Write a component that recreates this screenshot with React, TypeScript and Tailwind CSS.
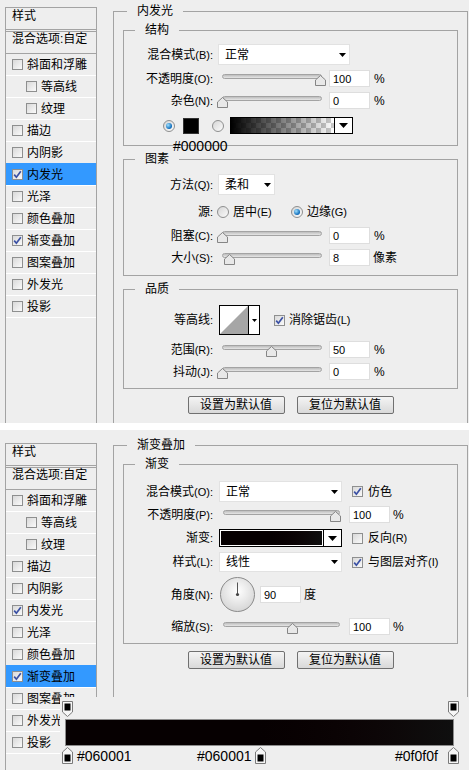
import React from 'react';

type Item = { label: string; indent?: boolean };

const ITEMS: Item[] = [
  { label: '斜面和浮雕' },
  { label: '等高线', indent: true },
  { label: '纹理', indent: true },
  { label: '描边' },
  { label: '内阴影' },
  { label: '内发光' },
  { label: '光泽' },
  { label: '颜色叠加' },
  { label: '渐变叠加' },
  { label: '图案叠加' },
  { label: '外发光' },
  { label: '投影' },
];

const CHECKED = ['内发光', '渐变叠加'];

function Check({ on }: { on?: boolean }) {
  return (
    <span className="flex h-[11px] w-[11px] shrink-0 items-center justify-center border border-[#8e8f8f] bg-linear-to-br from-[#d9d9d9] to-[#fafafa]">
      {on && (
        <svg width="9" height="9" viewBox="0 0 9 9">
          <path d="M1.2 4.6 L3.4 7.2 L7.8 1.2" fill="none" stroke="#3a50a4" strokeWidth="1.7" />
        </svg>
      )}
    </span>
  );
}

function Radio({ on }: { on?: boolean }) {
  return (
    <span className="flex h-[12px] w-[12px] shrink-0 items-center justify-center rounded-full border border-[#8e8f8f] bg-linear-to-br from-[#d6d6d6] to-[#fbfbfb]">
      {on && <span className="h-[6px] w-[6px] rounded-full bg-[radial-gradient(circle_at_35%_35%,#9fe0ff,#0b69b8_70%)]" />}
    </span>
  );
}

function Tri({ big }: { big?: boolean }) {
  return big ? (
    <svg width="9" height="5" viewBox="0 0 9 5">
      <path d="M0 0H9L4.5 5Z" fill="#000" />
    </svg>
  ) : (
    <svg width="7" height="4" viewBox="0 0 7 4">
      <path d="M0 0H7L3.5 4Z" fill="#000" />
    </svg>
  );
}

function Lbl({ t, k }: { t: string; k?: string }) {
  return (
    <span className="w-[89px] shrink-0 text-right">
      {t}
      {k && <span className="text-[11px]">({k})</span>}
      <span className="text-[11px]">:</span>
    </span>
  );
}

function Num({ v }: { v: string }) {
  return (
    <span className="flex h-[17px] w-[41px] shrink-0 items-center border border-[#dedede] bg-white pl-[3px] text-[11px]">
      {v}
    </span>
  );
}

function Slider({ wide, left }: { wide?: boolean; left: number }) {
  return (
    <span className={`relative h-[17px] shrink-0 ${wide ? 'ml-[6px] w-[130px]' : 'ml-[5px] w-[111px]'}`}>
      <span
        className={`absolute left-[4px] top-[4px] h-[5px] rounded-full border border-[#a3a3a3] bg-linear-to-b from-[#bdbdbd] to-[#e6e6e6] ${
          wide ? 'right-[9px]' : 'right-[7px]'
        }`}
      />
      <svg className="absolute top-[5px]" style={{ left }} width="11" height="11" viewBox="0 0 11 11">
        <path d="M0.5 10.5V5L5.5 0.5L10.5 5V10.5Z" fill="#e8e8e8" stroke="#858585" />
      </svg>
    </span>
  );
}

function Select({ text, w }: { text: string; w: string }) {
  return (
    <div className={`${w} flex h-full shrink-0 items-center justify-between border border-[#e2e2e2] bg-white pl-[6px] pr-[3px]`}>
      <span>{text}</span>
      <Tri />
    </div>
  );
}

function Group({ title, className, children }: { title: string; className: string; children: React.ReactNode }) {
  return (
    <div className={`relative border border-[#a3a3a3] ${className}`}>
      <span className="absolute -top-[8px] left-[11px] bg-[#eeeeee] px-[10px] leading-[14px]">{title}</span>
      {children}
    </div>
  );
}

function Btn({ children }: { children: React.ReactNode }) {
  return (
    <div className="flex h-[18px] w-[97px] items-center justify-center rounded-[2px] border border-[#707070] bg-linear-to-b from-[#f4f4f4] to-[#d9d9d9]">
      {children}
    </div>
  );
}

function Buttons() {
  return (
    <div className="mt-[7px] flex justify-center gap-[12px]">
      <Btn>设置为默认值</Btn>
      <Btn>复位为默认值</Btn>
    </div>
  );
}

function Sidebar({ active }: { active: string }) {
  return (
    <div className="flex w-[92px] shrink-0 flex-col self-stretch border-l border-r border-t border-[#a3a3a3]">
      <div className="h-[21px] pl-[6px] pt-[1px]">样式</div>
      <div className="h-[3px] border-b border-t border-[#a3a3a3]" />
      <div className="h-[21px] pl-[6px]">混合选项:自定</div>
      {ITEMS.map((it, i) => {
        const on = it.label === active;
        const line = i === 0 ? 'border-[#a3a3a3]' : on ? 'border-[#3399ff]' : 'border-white';
        return (
          <div
            key={it.label}
            className={`flex h-[22px] shrink-0 items-center border-t ${line} ${on ? 'bg-[#3399ff]' : ''} ${
              it.indent ? 'pl-[20px]' : 'pl-[6px]'
            }`}
          >
            <Check on={CHECKED.includes(it.label)} />
            <span className="ml-[4px]">{it.label}</span>
          </div>
        );
      })}
      <div className="border-t border-white" />
    </div>
  );
}

function TopStop() {
  return (
    <svg width="11" height="16" viewBox="0 0 11 16">
      <path d="M0.5 0.5H10.5V11L5.5 15.5L0.5 11Z" fill="#f6f6f6" stroke="#7a7a7a" />
      <rect x="2.5" y="2.5" width="6" height="7" fill="#000" />
    </svg>
  );
}

function BottomStop() {
  return (
    <svg width="11" height="17" viewBox="0 0 11 17">
      <path d="M0.5 5L5.5 0.5L10.5 5V16.5H0.5Z" fill="#f6f6f6" stroke="#7a7a7a" />
      <rect x="2.5" y="7.5" width="6" height="7" fill="#000" />
    </svg>
  );
}

const HEX = "[font-family:'Liberation_Sans',sans-serif] text-[14px] leading-[16px]";

function InnerGlow() {
  return (
    <div className="flex h-[423px] overflow-hidden bg-[#eeeeee] pl-[5px] pt-[7px]">
      <Sidebar active="内发光" />
      <div className="relative ml-[16px] mt-[4px] w-[355px] shrink-0 self-stretch border-l border-r border-t border-[#a3a3a3] px-[9px] pt-[18px]">
        <span className="absolute -top-[8px] left-[13px] bg-[#eeeeee] px-[10px] leading-[14px]">内发光</span>

        <Group title="结构" className="pb-[11px] pt-[13px]">
          <div className="flex h-[21px] items-center">
            <Lbl t="混合模式" k="B" />
            <div className="ml-[5px] h-full">
              <Select text="正常" w="w-[132px]" />
            </div>
          </div>
          <div className="mt-[5px] flex h-[17px] items-center">
            <Lbl t="不透明度" k="O" />
            <Slider left={97} />
            <Num v="100" />
            <span className="ml-[4px]">%</span>
          </div>
          <div className="mt-[5px] flex h-[17px] items-center">
            <Lbl t="杂色" k="N" />
            <Slider left={-1} />
            <Num v="0" />
            <span className="ml-[4px]">%</span>
          </div>
          <div className="mt-[8px] flex h-[17px] items-center">
            <span className="ml-[39px]">
              <Radio on />
            </span>
            <span className="ml-[8px] h-[16px] w-[16px] border border-[#333] bg-black" />
            <span className="ml-[13px]">
              <Radio />
            </span>
            <div className="ml-[6px] flex h-[17px] w-[123px] border border-black">
              <div className="flex-1 bg-[repeating-conic-gradient(#cbcbcb_0%_25%,#ffffff_0%_50%)] bg-size-[10px_10px]">
                <div className="h-full bg-linear-to-r from-black to-transparent" />
              </div>
              <div className="flex w-[18px] items-center justify-center border-l border-black bg-white">
                <Tri big />
              </div>
            </div>
          </div>
          <span className={`absolute -bottom-[9px] left-[49px] ${HEX}`}>#000000</span>
        </Group>

        <Group title="图素" className="mt-[13px] pb-[9px] pt-[14px]">
          <div className="flex h-[21px] items-center">
            <Lbl t="方法" k="Q" />
            <div className="ml-[5px] h-full">
              <Select text="柔和" w="w-[57px]" />
            </div>
          </div>
          <div className="mt-[8px] flex h-[18px] items-center">
            <Lbl t="源" />
            <div className="ml-[4px] flex w-[74px] items-center">
              <Radio />
              <span className="ml-[4px]">
                居中<span className="text-[11px]">(E)</span>
              </span>
            </div>
            <Radio on />
            <span className="ml-[4px]">
              边缘<span className="text-[11px]">(G)</span>
            </span>
          </div>
          <div className="mt-[6px] flex h-[17px] items-center">
            <Lbl t="阻塞" k="C" />
            <Slider left={-1} />
            <Num v="0" />
            <span className="ml-[4px]">%</span>
          </div>
          <div className="mt-[5px] flex h-[17px] items-center">
            <Lbl t="大小" k="S" />
            <Slider left={6} />
            <Num v="8" />
            <span className="ml-[3px]">像素</span>
          </div>
        </Group>

        <Group title="品质" className="mt-[13px] pb-[8px] pt-[15px]">
          <div className="flex h-[30px] items-center">
            <Lbl t="等高线" />
            <div className="ml-[6px] flex h-[30px] w-[41px] border border-black bg-white">
              <svg width="28" height="28" viewBox="0 0 28 28">
                <path d="M0 28L28 0V28Z" fill="#a6a6a6" />
              </svg>
              <div className="flex flex-1 items-center justify-center border-l border-black">
                <svg width="5" height="3" viewBox="0 0 5 3">
                  <path d="M0 0H5L2.5 3Z" fill="#000" />
                </svg>
              </div>
            </div>
            <span className="ml-[14px]">
              <Check on />
            </span>
            <span className="ml-[4px]">
              消除锯齿<span className="text-[11px]">(L)</span>
            </span>
          </div>
          <div className="mt-[6px] flex h-[17px] items-center">
            <Lbl t="范围" k="R" />
            <Slider left={48} />
            <Num v="50" />
            <span className="ml-[4px]">%</span>
          </div>
          <div className="mt-[5px] flex h-[17px] items-center">
            <Lbl t="抖动" k="J" />
            <Slider left={-1} />
            <Num v="0" />
            <span className="ml-[4px]">%</span>
          </div>
        </Group>

        <Buttons />
      </div>
    </div>
  );
}

function GradientOverlay() {
  return (
    <div className="relative flex h-[340px] overflow-hidden bg-[#eeeeee] pl-[5px] pt-[13px]">
      <Sidebar active="渐变叠加" />
      <div className="relative ml-[16px] mt-[2px] w-[355px] shrink-0 self-stretch border-l border-r border-t border-[#a3a3a3] px-[9px] pt-[18px]">
        <span className="absolute -top-[8px] left-[13px] bg-[#eeeeee] px-[10px] leading-[14px]">渐变叠加</span>

        <Group title="渐变" className="pb-[8px] pt-[16px]">
          <div className="flex h-[21px] items-center">
            <Lbl t="混合模式" k="O" />
            <div className="ml-[6px] h-full">
              <Select text="正常" w="w-[123px]" />
            </div>
            <span className="ml-[10px]">
              <Check on />
            </span>
            <span className="ml-[5px]">仿色</span>
          </div>
          <div className="mt-[4px] flex h-[17px] items-center">
            <Lbl t="不透明度" k="P" />
            <Slider wide left={111} />
            <Num v="100" />
            <span className="ml-[3px]">%</span>
          </div>
          <div className="mt-[6px] flex h-[18px] items-center">
            <Lbl t="渐变" />
            <div className="ml-[6px] flex h-[18px] w-[123px] border border-black bg-white">
              <div className="m-[1px] flex-1 bg-linear-to-r from-[#060001] via-[#060001] to-[#0f0f0f]" />
              <div className="flex w-[18px] items-center justify-center border-l border-black">
                <Tri big />
              </div>
            </div>
            <span className="ml-[10px]">
              <Check />
            </span>
            <span className="ml-[5px]">
              反向<span className="text-[11px]">(R)</span>
            </span>
          </div>
          <div className="mt-[5px] flex h-[20px] items-center">
            <Lbl t="样式" k="L" />
            <div className="ml-[6px] h-full">
              <Select text="线性" w="w-[123px]" />
            </div>
            <span className="ml-[10px]">
              <Check on />
            </span>
            <span className="ml-[5px]">
              与图层对齐<span className="text-[11px]">(I)</span>
            </span>
          </div>
          <div className="mt-[5px] flex h-[35px] items-center">
            <Lbl t="角度" k="N" />
            <svg className="ml-[7px] shrink-0" width="35" height="35" viewBox="0 0 35 35">
              <defs>
                <radialGradient id="dial" cx="50%" cy="40%" r="60%">
                  <stop offset="0%" stopColor="#ffffff" />
                  <stop offset="100%" stopColor="#d6d6d6" />
                </radialGradient>
              </defs>
              <circle cx="17.5" cy="17.5" r="17" fill="url(#dial)" stroke="#8a8a8a" />
              <line x1="17.5" y1="5.5" x2="17.5" y2="17.5" stroke="#555" strokeWidth="1" />
              <circle cx="17.5" cy="17.5" r="1.6" fill="#444" />
            </svg>
            <span className="ml-[5px]">
              <Num v="90" />
            </span>
            <span className="ml-[3px]">度</span>
          </div>
          <div className="mt-[6px] flex h-[17px] items-center">
            <Lbl t="缩放" k="S" />
            <Slider wide left={68} />
            <Num v="100" />
            <span className="ml-[3px]">%</span>
          </div>
        </Group>

        <Buttons />
      </div>

      {/* gradient editor strip on top */}
      <div className="absolute bottom-0 left-[60px] right-0 top-[267px] flex flex-col bg-[#eeeeee]">
        <div className="relative mt-[4px] h-[16px]">
          <span className="absolute left-[2px] top-0">
            <TopStop />
          </span>
          <span className="absolute left-[388px] top-0">
            <TopStop />
          </span>
        </div>
        <div className="ml-[5px] mt-[2px] h-[27px] w-[389px] border border-[#8c8c8c] bg-linear-to-r from-[#060001] via-[#060001] to-[#0f0f0f]" />
        <div className="relative mt-[1px] h-[18px]">
          <span className="absolute left-[2px] top-0">
            <BottomStop />
          </span>
          <span className={`absolute left-[17px] top-[1px] ${HEX}`}>#060001</span>
          <span className={`absolute left-[137px] top-[1px] ${HEX}`}>#060001</span>
          <span className="absolute left-[195px] top-0">
            <BottomStop />
          </span>
          <span className={`absolute left-[335px] top-[1px] ${HEX}`}>#0f0f0f</span>
          <span className="absolute left-[388px] top-0">
            <BottomStop />
          </span>
        </div>
      </div>
    </div>
  );
}

export default function App() {
  return (
    <div className="h-[770px] w-[469px] overflow-hidden bg-white text-[12px] leading-[14px] text-black [font-family:'Liberation_Sans','Noto_Sans_CJK_SC',sans-serif]">
      <InnerGlow />
      <div className="h-[7px]" />
      <GradientOverlay />
    </div>
  );
}
